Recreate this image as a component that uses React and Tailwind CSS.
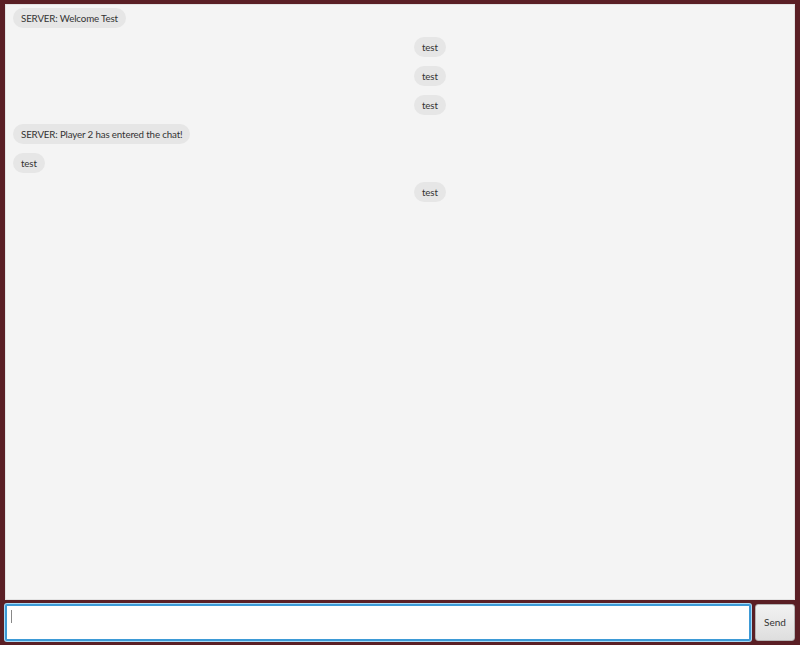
const messages = [
  { text: 'SERVER: Welcome Test', side: 'left' },
  { text: 'test', side: 'right' },
  { text: 'test', side: 'right' },
  { text: 'test', side: 'right' },
  { text: 'SERVER: Player 2 has entered the chat!', side: 'left' },
  { text: 'test', side: 'left' },
  { text: 'test', side: 'right' },
];

const Bubble = ({ text }) => (
  <div className="h-[20px] rounded-full bg-[#e6e6e6] px-[8px] text-[9.75px] tracking-[-0.15px] leading-[20px] whitespace-nowrap text-[#333]">
    {text}
  </div>
);

export default function App() {
  return (
    <div
      className="flex h-[645px] w-[800px] flex-col gap-[4px] bg-[#5a1f25] px-[5px] pt-[4px] pb-[4px]"
      style={{ fontFamily: 'Lato, "Noto Sans", sans-serif' }}
    >
      {/* Chat log */}
      <div className="flex flex-1 flex-col gap-[9px] border border-[#e2e2e2] bg-[#f4f4f4] px-[7px] pt-[3px]">
        {messages.map((m, i) => (
          <div key={i} className="flex h-[20px]">
            {m.side === 'left' ? (
              <Bubble text={m.text} />
            ) : (
              <div className="ml-[401px] flex">
                <Bubble text={m.text} />
              </div>
            )}
          </div>
        ))}
      </div>

      {/* Input row */}
      <div className="flex h-[37px] gap-[4px]">
        <div className="flex flex-1 items-start rounded-[2px] border-2 border-[#3d9ad6] bg-white pl-[4px] pt-[4px] ring-1 ring-[#a9daf5]">
          <span className="h-[13px] w-[1px] bg-[#888]" />
        </div>
        <button className="w-[40px] rounded-[3px] border border-[#b5b5b5] bg-gradient-to-b from-[#f2f2f2] to-[#dedede] text-[10px] text-[#333]">
          Send
        </button>
      </div>
    </div>
  );
}
